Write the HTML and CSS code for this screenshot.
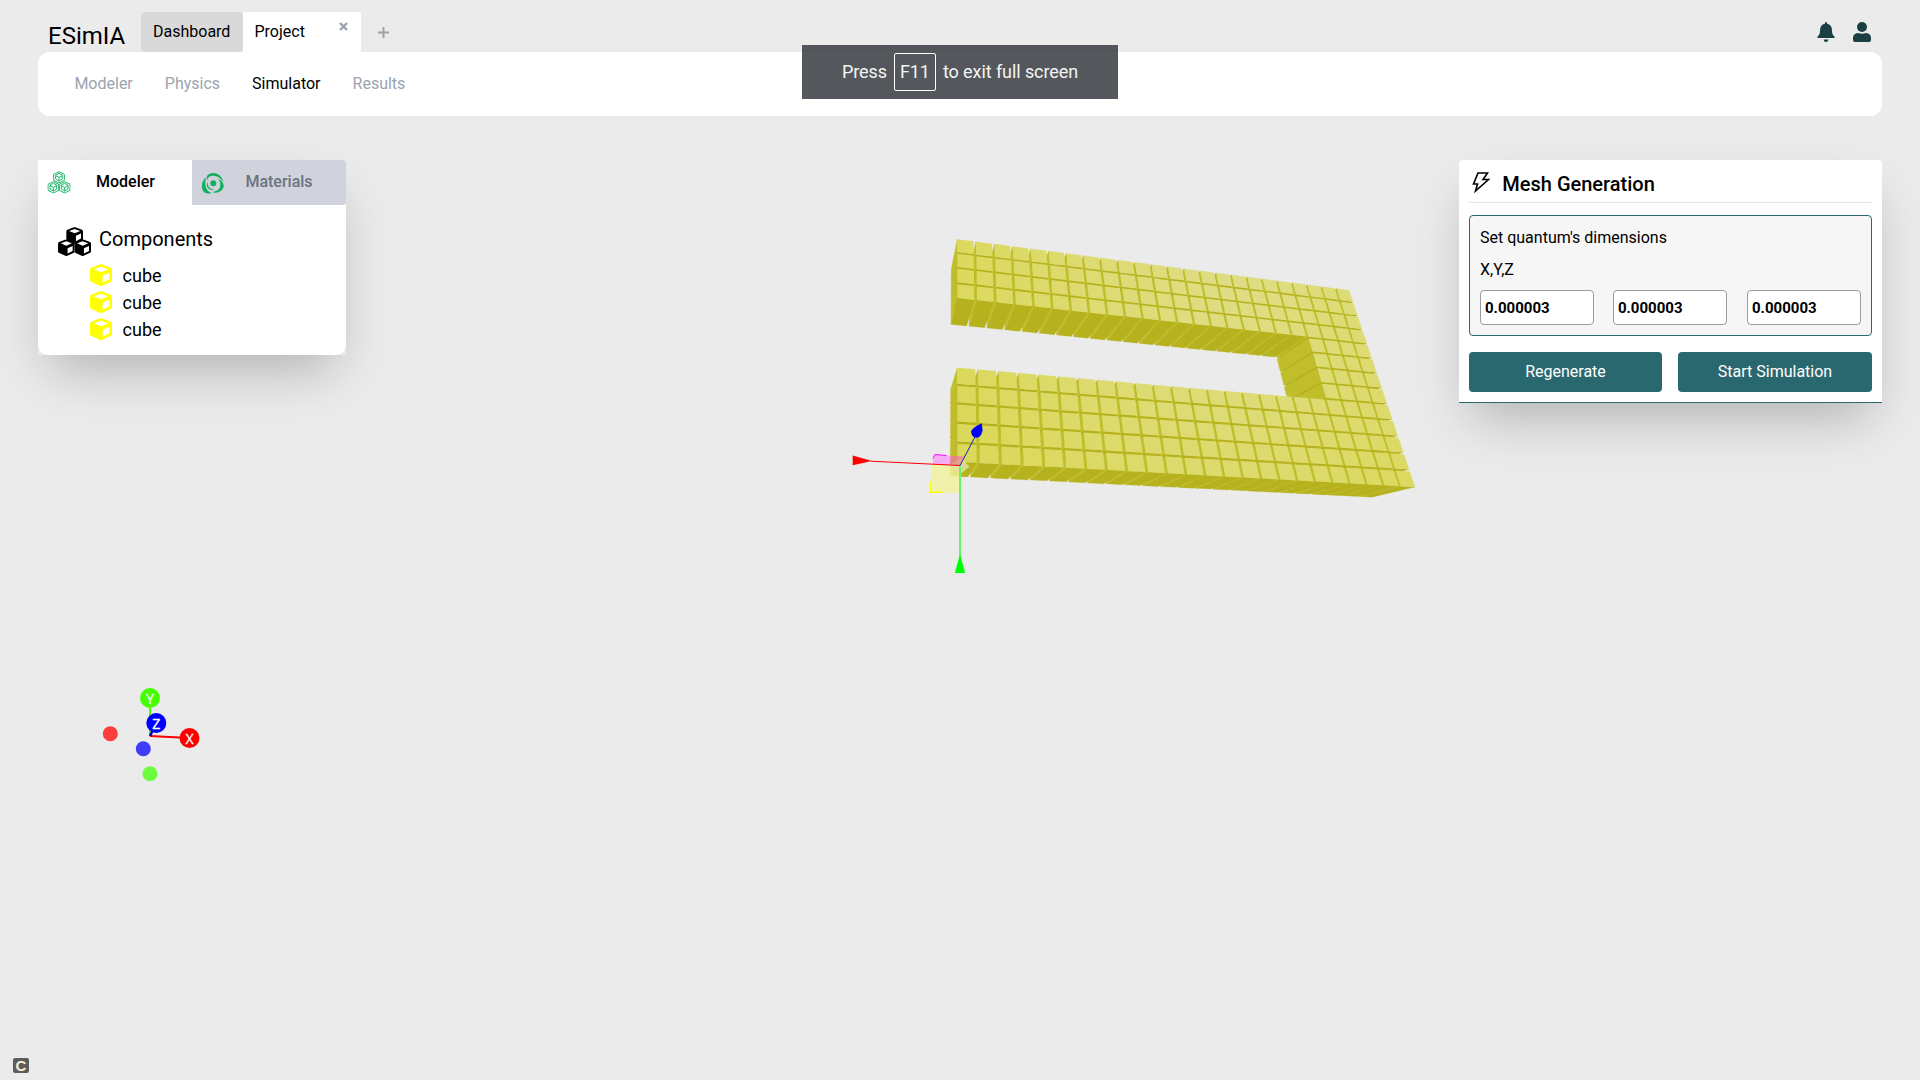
FILE: index.html
```html
<!DOCTYPE html>
<html lang="en">
<head>
<meta charset="utf-8">
<title>ESimIA</title>
<link rel="stylesheet" href="styles.css">
</head>
<body>
<svg class="defs" aria-hidden="true">
  <symbol id="cube" viewBox="0 0 66 66">
    <path fill-rule="evenodd" d="M30 1Q33 0 36 1L62 11Q66 13 66 17V48Q66 51 63 53L37 65Q33 67 29 65L3 53Q0 51 0 48V17Q0 13 4 11ZM33 8L11 16L33 25L55 16ZM38 35V56L58 46V26Z"/>
  </symbol>
  <symbol id="cubes" viewBox="0 0 99 87">
    <use href="#cube" x="24" y="0" width="52" height="50"/>
    <use href="#cube" x="0" y="37" width="50" height="50"/>
    <use href="#cube" x="49" y="37" width="50" height="50"/>
  </symbol>
  <symbol id="hexcube" viewBox="0 0 36 38">
    <path d="M18 2L34 10V28L18 36L2 28V10ZM18 19V31M18 19L8 14M18 19L28 14M18 7L28 12V24L18 30L8 24V12Z"/>
  </symbol>
</svg>

<svg class="scene" width="1920" height="1080" viewBox="0 0 1920 1080">
  <defs>
    <radialGradient id="sheen" gradientUnits="userSpaceOnUse" cx="1235" cy="290" r="290">
      <stop offset="0" stop-color="#dfdd85"/>
      <stop offset="0.5" stop-color="#dddb72"/>
      <stop offset="1" stop-color="#dbd95b"/>
    </radialGradient>
  </defs>
  <g id="mesh"></g>
  <g class="gizmo">
    <path fill="#f4f29c" fill-opacity=".8" d="M932 464.500L960.300 465.500V493.300L930.700 492.300Z"/>
    <path fill="#ff6eff" fill-opacity=".5" d="M934 455L963.500 456.500L960 465.500L932.500 464.500Z"/>
    <path fill="none" stroke="#f0f" d="M933 458.500L935 454.500L946.500 455.500"/>
    <path fill="none" stroke="#ff0" stroke-width="1.500" d="M931 481L930.500 492.300H942.500"/>
    <path fill="#e4e2ac" fill-opacity=".8" d="M950.500 464.500L960.500 458L969.500 466.500L960 474.500Z"/>
    <path fill="#e87878" fill-opacity=".55" d="M951 456L963.500 456.500L960 465.500L950 464.700Z"/>
    <path stroke="#f00" d="M871 461.200L960 465.500"/>
    <path fill="#f00" d="M852.700 455.500V465.300L872 461Z"/>
    <path stroke="#1c1cc0" d="M960 465.500L975 437"/>
    <path fill="#00f" d="M981.700 423.300L982.600 430.500Q981 437.500 976.500 437.700Q971.500 437.500 971 431.500Q972 428 981.700 423.300Z"/>
    <path stroke="#6cf46c" stroke-width="2" d="M960 466V556"/>
    <path fill="#0f0" d="M960 554L965.200 573H954.800Z"/>
  </g>
  <g class="compass">
    <circle cx="110.300" cy="733.700" r="7.500" fill="#fb3d3d"/>
    <circle cx="143.300" cy="748.700" r="7.500" fill="#3d3dfb"/>
    <circle cx="150" cy="773.700" r="7.500" fill="#6cfb3d"/>
    <path stroke="#4f0" stroke-width="2" d="M150 736V700"/>
    <path stroke="#f00" stroke-width="2" d="M150 736L189 738"/>
    <path stroke="#00a" stroke-width="2.500" d="M150 736L156 724"/>
    <circle cx="150" cy="698" r="10" fill="#4f0"/>
    <circle cx="189.500" cy="738" r="10" fill="#f00"/>
    <circle cx="156.300" cy="723" r="10" fill="#00f"/>
    <text x="150" y="703.500">Y</text>
    <text x="189.500" y="743.500">X</text>
    <text x="156.300" y="729">Z</text>
  </g>
</svg>

<div class="app">
  <header class="topbar">
    <span class="brand">ESimIA</span>
    <div class="tab">Dashboard</div>
    <div class="tab active">Project
      <svg class="close" width="9" height="9" viewBox="0 0 9 9"><path d="M1 1L8 8M8 1L1 8"/></svg>
    </div>
    <svg class="plus" width="11" height="11" viewBox="0 0 11 11"><path d="M5.500 0V11M0 5.500H11"/></svg>
    <div class="actions">
      <svg width="18" height="20" viewBox="0 0 18 20"><path d="M9 0Q10.200 0 10.200 1.800Q15 3 15 8.500Q15 13 17.500 14.500Q18 16 17 16H1Q0 16 .500 14.500Q3 13 3 8.500Q3 3 7.800 1.800Q7.800 0 9 0ZM6.500 17.500H11.500Q11 20 9 20T6.500 17.500Z"/></svg>
      <svg width="18" height="20" viewBox="0 0 18 20"><circle cx="9" cy="5" r="5"/><path d="M5 11Q9 12.500 13 11Q18 11.500 18 16V18Q18 20 16 20H2Q0 20 0 18V16Q0 11.500 5 11Z"/></svg>
    </div>
  </header>
  <nav class="menu">
    <a>Modeler</a><a>Physics</a><a class="current">Simulator</a><a>Results</a>
  </nav>

  <main class="workspace">
    <section class="explorer">
      <div class="explorer-tabs">
        <div class="etab on">
          <svg class="ico-model" width="24" height="23" viewBox="0 0 72 69">
            <use href="#hexcube" x="18" y="0" width="36" height="38"/>
            <use href="#hexcube" x="1" y="30" width="36" height="38"/>
            <use href="#hexcube" x="35" y="30" width="36" height="38"/>
          </svg>
          <span>Modeler</span>
        </div>
        <div class="etab off">
          <svg class="ico-material" width="22" height="22" viewBox="0 0 66 66">
            <circle cx="34" cy="34" r="9"/>
            <path d="M15 12C24 -2 58 -2 64 31C54 14 38 9 27 12C21 14 17 17 17 24Q13 18 15 12Z"/>
            <path d="M48 20C69 30 72 50 50 60C44 63 36 63 30 60C46 58 55 50 55 38Q55 28 48 20Z"/>
            <path d="M13 16C-2 26 -3 48 4 58C9 65 20 66 28 63C16 58 9 46 10 32Q10 24 13 16ZM17 28C14 42 26 54 38 52Q24 58 16 46Q12 38 17 28Z"/>
          </svg>
          <span>Materials</span>
        </div>
      </div>
      <div class="tree">
        <h2><svg width="33" height="29"><use href="#cubes" width="33" height="29"/></svg>Components</h2>
        <ul>
          <li><svg width="22" height="22"><use href="#cube" width="22" height="22"/></svg>cube</li>
          <li><svg width="22" height="22"><use href="#cube" width="22" height="22"/></svg>cube</li>
          <li><svg width="22" height="22"><use href="#cube" width="22" height="22"/></svg>cube</li>
        </ul>
      </div>
    </section>

    <section class="mesh-panel">
      <h1><svg width="18" height="21" viewBox="0 0 18 21"><path d="M6 1H15.500L11 7.500H16.500L3.500 19L5.500 12H1.500Z"/></svg>Mesh Generation</h1>
      <div class="quantum">
        <p>Set quantum's dimensions</p>
        <p>X,Y,Z</p>
        <div class="fields">
          <input value="0.000003"><input value="0.000003"><input value="0.000003">
        </div>
      </div>
      <div class="buttons">
        <button>Regenerate</button><button>Start Simulation</button>
      </div>
    </section>
  </main>
</div>

<div class="toast"><span>Press</span><kbd>F11</kbd><span>to exit full screen</span></div>
<div class="badge">C</div>
<script src="mesh.js"></script>
</body>
</html>
```
FILE: styles.css
```css
* { box-sizing: border-box; margin: 0; padding: 0; }
body {
  width: 1920px; height: 1080px; overflow: hidden; position: relative;
  background: #ebebeb; color: #000;
  font-family: Roboto, "Liberation Sans", sans-serif; font-size: 16px; line-height: 24px;
}
svg { display: block; flex: none; }
.defs { position: absolute; width: 0; height: 0; }
.scene { position: absolute; left: 0; top: 0; }
.compass text {
  font: 14px "Open Sans", "Noto Sans", sans-serif; fill: #fff; stroke: #fff; stroke-width: .3; text-anchor: middle;
}
.app { position: relative; }

.topbar { display: flex; height: 52px; padding: 12px 48px 0 48px; }
.brand { width: 93px; font-size: 24px; line-height: 49px; }
.tab { width: 102px; height: 40px; padding-left: 12px; line-height: 39px; background: #d9d9d9; border-radius: 4px; }
.tab.active { display: flex; justify-content: space-between; width: 118px; padding-right: 13.5px; padding-left: 11.5px; background: #fff; border-radius: 0; }
.close { margin-top: 9.5px; stroke: #9ca3af; stroke-width: 2.4; }
.plus { margin: 14.5px 0 0 16.5px; stroke: #9ca3af; stroke-width: 2; }
.actions { display: flex; gap: 18px; margin: 10px 0 0 auto; padding-right: 1px; fill: #1a4044; }

.menu { display: flex; gap: 32px; height: 64px; margin: 0 38px; padding: 0 36.4px; line-height: 63px; background: #fff; border-radius: 12px; color: #9ca3af; }
.menu .current { color: #000; }

.workspace { display: flex; justify-content: space-between; align-items: flex-start; padding: 44px 38px 0; }

.explorer { width: 308px; box-shadow: 0 25px 50px -12px rgba(0, 0, 0, .25); }
.explorer-tabs { display: flex; }
.etab { display: flex; width: 154px; height: 45px; font-weight: 500; line-height: 43px; }
.etab.on { background: #fff; }
.etab.off { background: #d0d3db; color: #6b7280; border-radius: 0 4px 4px 0; }
.etab span { flex: 1; text-align: center; }
.ico-model { margin: 11px 0 0 8.5px; fill: none; stroke: #10b060; stroke-width: 2.8; }
.ico-material { margin: 12px 0 0 10px; fill: #10b060; }
.etab.on span { padding-right: 11.5px; }
.etab.off span { padding-right: 12px; }
.tree { height: 150px; padding: 20px; background: #fff; border-radius: 0 0 10px 10px; }
.tree h2 { display: flex; height: 36px; gap: 8px; font-size: 20px; font-weight: 400; line-height: 28px; }
.tree h2 svg { margin-top: 2px; }
.tree ul { list-style: none; padding: 1px 0 0 32px; }
.tree li { display: flex; gap: 10.6px; height: 27px; font-size: 18px; line-height: 27px; }
.tree li svg { margin-top: 2px; fill: #ff0; }

.mesh-panel { width: 423px; height: 243px; padding: 10px; background: #fff; border-radius: 4px 4px 0 0; border-bottom: 1px solid #2a6870; box-shadow: 0 25px 50px -12px rgba(0, 0, 0, .25); }
.mesh-panel h1 { display: flex; gap: 12.3px; height: 33px; padding-left: 3px; border-bottom: 1px solid #e5e5e5; font-size: 20px; font-weight: 500; line-height: 28px; }
.mesh-panel h1 svg { margin-top: 2px; fill: none; stroke: #000; stroke-width: 1.6; stroke-linejoin: miter; }
.quantum { height: 121px; margin-top: 12px; padding: 6px 10px; background: #f6f6f6; border: 1px solid #2a6870; border-radius: 4px; }
.quantum p { height: 32px; line-height: 32px; }
.fields { display: grid; grid-template-columns: repeat(3, 114px); justify-content: space-between; margin-top: 4px; }
.fields input { width: 114px; height: 35px; padding: 0 4px; border: 1px solid #9c9c9c; border-radius: 4px; background: #fff; color: #000; font: 700 15px Roboto, sans-serif; }
.fields input:nth-child(2) { margin-left: -.6px; }
.buttons { display: grid; grid-template-columns: 193px 194px; gap: 16px; margin-top: 16px; }
.buttons button { height: 40px; border: 0; border-radius: 4px; background: #2a6870; color: #fff; font: 400 16px Roboto, sans-serif; padding-bottom: 1px; }

.toast {
  position: absolute; left: 802px; top: 45px; width: 316px; height: 54px;
  display: flex; align-items: center; justify-content: center; gap: 7px;
  background: rgba(63, 67, 72, .89); color: #f4f4f4; font-size: 18px; letter-spacing: -.08px;
}
.toast kbd { width: 42px; height: 38px; border: 1px solid #fff; border-radius: 2px; font: inherit; line-height: 36px; text-align: center; }
.badge {
  position: absolute; left: 13px; top: 1058px; width: 16px; height: 15px;
  background: #5c5c5a; border-radius: 2px; color: #f5efdc;
  font: 700 15px/15px "Liberation Sans", sans-serif; text-align: center;
}
```
FILE: mesh.js
```js
// U-shaped mesh: 24 x 13 cells, one layer deep, with an opening in rows 4-7.
const COLS = 24, ROWS = 13, WIDTH = 0.86, HEIGHT = 0.88;
const U = COLS - 1 + WIDTH, V = ROWS - 1 + HEIGHT;

// Perspective camera; z = 0 is the front layer, z = 1 the back.
function project(col, row, z) {
  const u = col / U, v = row / V;
  const w = 1 + 0.15075 * u - 0.16594 * v + 0.0864 * z;
  const x = (957.3 + 595.06 * u - 158.85 * v + 76.2 * z) / w;
  const y = (239.2 + 94.52 * u + 145.89 * v + 53.04 * z) / w;
  return x.toFixed(2) + "," + y.toFixed(2);
}

const mesh = document.getElementById("mesh");
function face(points, fill, edge) {
  const p = document.createElementNS("http://www.w3.org/2000/svg", "polygon");
  p.setAttribute("points", points.map(a => project(...a)).join(" "));
  p.setAttribute("fill", fill);
  if (edge) {
    // A hairline in the face colour closes the seam between adjoining faces.
    p.setAttribute("stroke", fill);
    p.setAttribute("stroke-width", edge);
    p.setAttribute("stroke-linejoin", "round");
  }
  mesh.appendChild(p);
}

// Far cells first: the camera sees the front, left and bottom faces.
for (let r = 0; r < ROWS; r++) {
  for (let c = COLS - 1; c >= 0; c--) {
    if (r >= 4 && r < 8 && c < 20) continue;
    const c1 = c + WIDTH, r1 = r + HEIGHT;
    face([[c, r, 0], [c, r1, 0], [c, r1, 1], [c, r, 1]], "#c1be2c", 0.4);
    face([[c, r1, 0], [c1, r1, 0], [c1, r1, 1], [c, r1, 1]], "#b6b21e", 0.2);
    face([[c, r, 0], [c1, r, 0], [c1, r1, 0], [c, r1, 0]], "url(#sheen)");
  }
}
```
